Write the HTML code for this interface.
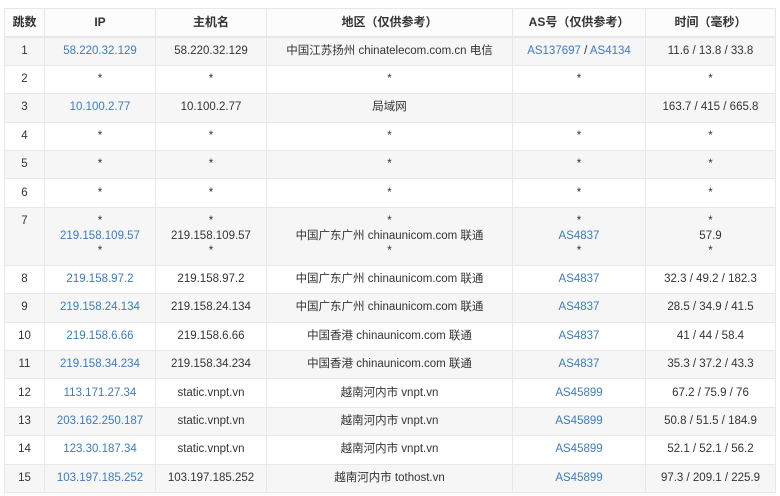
<!DOCTYPE html>
<html><head><meta charset="utf-8"><style>
body{margin:0;background:#fff;width:780px;height:496px;overflow:hidden;font-family:"Liberation Sans","Noto Sans CJK SC",sans-serif;font-size:11.5px;color:#333}
table{position:absolute;left:4px;top:8px;width:771px;border-collapse:collapse;table-layout:fixed}
td,th{border:1px solid #e8e8e8;text-align:center;padding:0;line-height:15px}
th{height:27px;font-weight:bold;background:#fcfcfc;border-bottom:2px solid #e8e8e8;font-size:12px}
tr{height:28.4px}
tbody tr:nth-child(odd){background:#f6f6f6}
a{color:#3b7cc0;text-decoration:none}
.t{vertical-align:top;padding-top:6px}
</style></head><body>
<table>
<colgroup><col style="width:40px"><col style="width:111px"><col style="width:111px"><col style="width:246px"><col style="width:133px"><col style="width:130px"></colgroup>
<thead><tr><th>跳数</th><th>IP</th><th>主机名</th><th>地区（仅供参考）</th><th>AS号（仅供参考）</th><th>时间（毫秒）</th></tr></thead>
<tbody>
<tr><td>1</td><td><a>58.220.32.129</a></td><td>58.220.32.129</td><td>中国江苏扬州 chinatelecom.com.cn 电信</td><td><a>AS137697</a> / <a>AS4134</a></td><td>11.6 / 13.8 / 33.8</td></tr>
<tr><td>2</td><td>*</td><td>*</td><td>*</td><td>*</td><td>*</td></tr>
<tr><td>3</td><td><a>10.100.2.77</a></td><td>10.100.2.77</td><td>局域网</td><td></td><td>163.7 / 415 / 665.8</td></tr>
<tr><td>4</td><td>*</td><td>*</td><td>*</td><td>*</td><td>*</td></tr>
<tr><td>5</td><td>*</td><td>*</td><td>*</td><td>*</td><td>*</td></tr>
<tr><td>6</td><td>*</td><td>*</td><td>*</td><td>*</td><td>*</td></tr>
<tr style="height:58px"><td class="t">7</td><td>*<br><a>219.158.109.57</a><br>*</td><td>*<br>219.158.109.57<br>*</td><td>*<br>中国广东广州 chinaunicom.com 联通<br>*</td><td>*<br><a>AS4837</a><br>*</td><td>*<br>57.9<br>*</td></tr>
<tr><td>8</td><td><a>219.158.97.2</a></td><td>219.158.97.2</td><td>中国广东广州 chinaunicom.com 联通</td><td><a>AS4837</a></td><td>32.3 / 49.2 / 182.3</td></tr>
<tr><td>9</td><td><a>219.158.24.134</a></td><td>219.158.24.134</td><td>中国广东广州 chinaunicom.com 联通</td><td><a>AS4837</a></td><td>28.5 / 34.9 / 41.5</td></tr>
<tr><td>10</td><td><a>219.158.6.66</a></td><td>219.158.6.66</td><td>中国香港 chinaunicom.com 联通</td><td><a>AS4837</a></td><td>41 / 44 / 58.4</td></tr>
<tr><td>11</td><td><a>219.158.34.234</a></td><td>219.158.34.234</td><td>中国香港 chinaunicom.com 联通</td><td><a>AS4837</a></td><td>35.3 / 37.2 / 43.3</td></tr>
<tr><td>12</td><td><a>113.171.27.34</a></td><td>static.vnpt.vn</td><td>越南河内市 vnpt.vn</td><td><a>AS45899</a></td><td>67.2 / 75.9 / 76</td></tr>
<tr><td>13</td><td><a>203.162.250.187</a></td><td>static.vnpt.vn</td><td>越南河内市 vnpt.vn</td><td><a>AS45899</a></td><td>50.8 / 51.5 / 184.9</td></tr>
<tr><td>14</td><td><a>123.30.187.34</a></td><td>static.vnpt.vn</td><td>越南河内市 vnpt.vn</td><td><a>AS45899</a></td><td>52.1 / 52.1 / 56.2</td></tr>
<tr><td>15</td><td><a>103.197.185.252</a></td><td>103.197.185.252</td><td>越南河内市 tothost.vn</td><td><a>AS45899</a></td><td>97.3 / 209.1 / 225.9</td></tr>
</tbody></table>
</body></html>
